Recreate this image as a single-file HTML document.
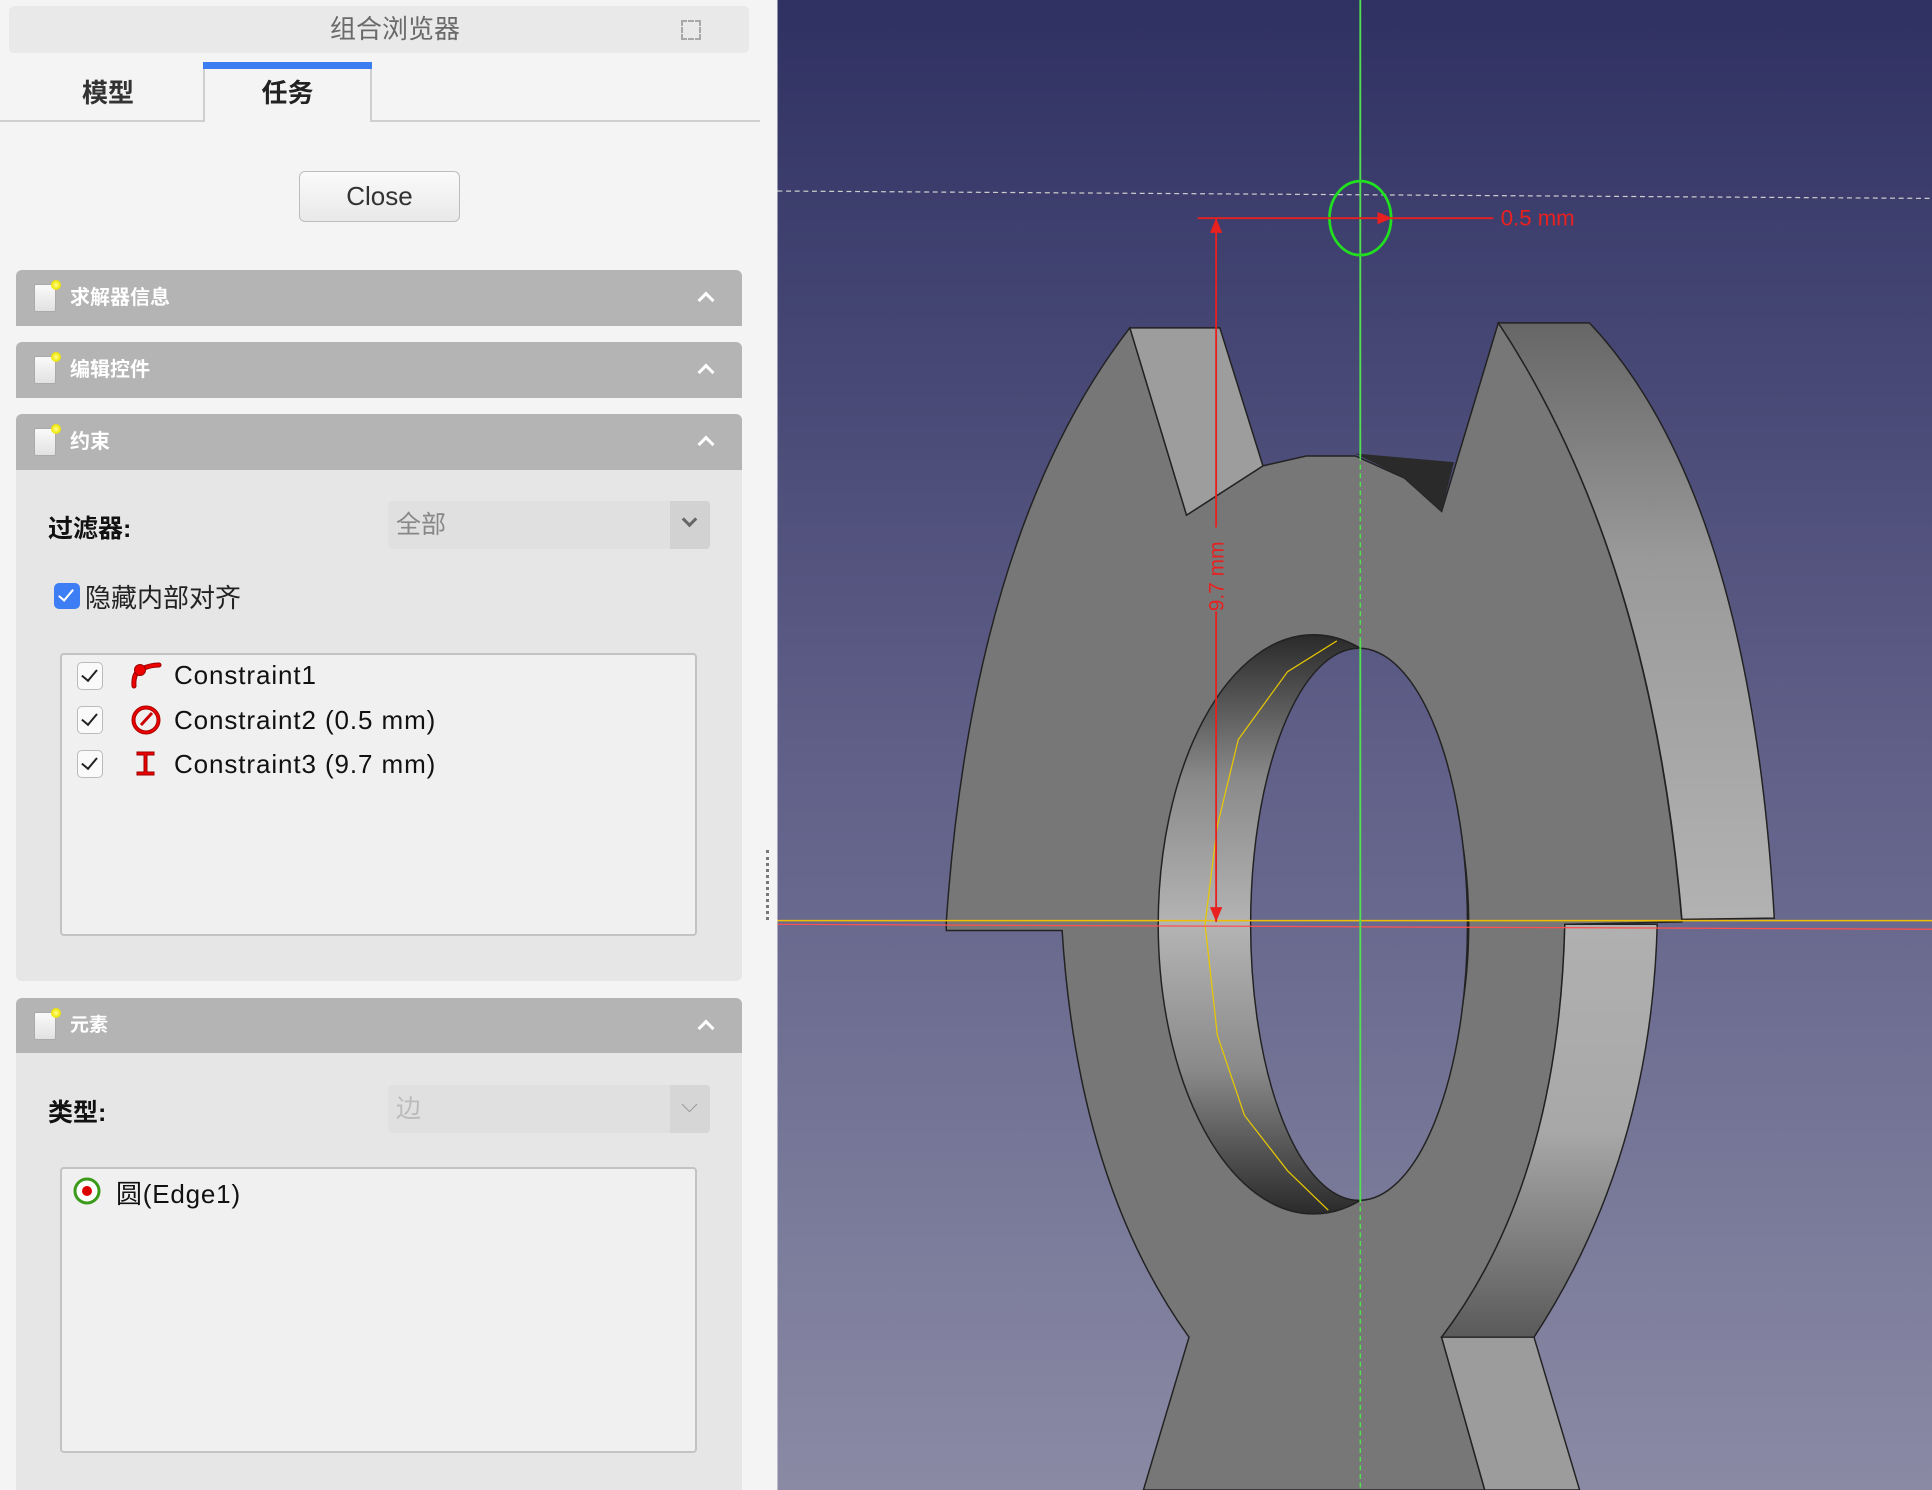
<!DOCTYPE html>
<html><head><meta charset="utf-8"><style>
*{margin:0;padding:0;box-sizing:border-box}
body{width:1932px;height:1490px;overflow:hidden;background:#f4f4f4;position:relative;font-family:"Liberation Sans","Noto Sans CJK SC",sans-serif}
.a{position:absolute}
.hdr{position:absolute;left:16px;width:726px;height:56px;background:#b4b4b4;border-radius:6px 6px 0 0;color:#fff;font-size:20px;font-weight:bold;line-height:56px}
.hdr .ic{position:absolute;left:18px;top:14px;width:22px;height:28px;background:linear-gradient(#fafafa,#e2e2e2);border:1px solid #aaa;border-radius:2px}
.hdr .ic:after{content:"";position:absolute;right:-6px;top:-5px;width:10px;height:10px;border-radius:50%;background:radial-gradient(#ffffa0,#f0e800 60%,rgba(240,232,0,0) 100%)}
.hdr .t{position:absolute;left:54px}
.hdr .ch{position:absolute;right:30px;top:24px;width:12px;height:12px;border-left:3px solid #fff;border-top:3px solid #fff;transform:rotate(45deg)}
.body{position:absolute;left:16px;width:726px;background:#e6e6e6}
.cb{position:absolute;width:26px;height:28px;background:#fafafa;border:1.5px solid #bbb;border-radius:5px}
.cb:after{content:"";position:absolute;left:7px;top:3px;width:7px;height:13px;border-right:2.5px solid #222;border-bottom:2.5px solid #222;transform:rotate(40deg)}
.row{position:absolute;left:174px;font-size:26px;color:#111;line-height:30px;letter-spacing:0.9px}
</style></head><body>
<div class="a" style="left:9px;top:6px;width:740px;height:47px;background:#e9e9e9;border-radius:5px;text-align:center;font-size:26px;color:#6a6a6a;line-height:47px;padding-left:32px">组合浏览器</div>
<div class="a" style="left:681px;top:20px;width:20px;height:20px;border:2px dashed #999;opacity:.8"></div>
<div class="a" style="left:0;top:120px;width:760px;height:2px;background:#cfcfcf"></div>
<div class="a" style="left:0;top:62px;width:216px;height:58px;text-align:center;font-size:26px;line-height:60px;color:#333;padding-top:1px;font-weight:bold">模型</div>
<div class="a" style="left:203px;top:62px;width:169px;height:60px;background:#f4f4f4;border-left:2px solid #cfcfcf;border-right:2px solid #cfcfcf;text-align:center;font-size:26px;line-height:60px;color:#222;padding-top:1px;font-weight:bold">任务</div>
<div class="a" style="left:203px;top:62px;width:169px;height:7px;background:#3c7ef2"></div>
<div class="a" style="left:299px;top:171px;width:161px;height:51px;border:1.5px solid #bdbdbd;border-radius:6px;background:linear-gradient(#fafafa,#e9e9e9);text-align:center;font-size:26px;line-height:48px;color:#333">Close</div>

<div class="hdr" style="top:270px"><div class="ic"></div><span class="t">求解器信息</span><div class="ch"></div></div>
<div class="hdr" style="top:342px"><div class="ic"></div><span class="t">编辑控件</span><div class="ch"></div></div>
<div class="hdr" style="top:414px"><div class="ic"></div><span class="t">约束</span><div class="ch"></div></div>
<div class="body" style="top:470px;height:511px;border-radius:0 0 6px 6px"></div>
<div class="a" style="left:48px;top:509px;font-size:25px;font-weight:bold;color:#111">过滤器:</div>
<div class="a" style="left:388px;top:501px;width:322px;height:48px;background:#e0e0e0;border-radius:4px;font-size:25px;color:#888;line-height:48px;padding-left:8px">全部</div>
<div class="a" style="left:670px;top:501px;width:40px;height:48px;background:#d2d2d2;border-radius:0 4px 4px 0"></div>
<div class="a" style="left:684px;top:514px;width:11px;height:11px;border-right:3px solid #666;border-bottom:3px solid #666;transform:rotate(45deg)"></div>
<div class="a" style="left:54px;top:583px;width:26px;height:26px;background:#3d7ef5;border-radius:5px"></div>
<div class="a" style="left:62px;top:586px;width:8px;height:15px;border-right:2.5px solid #fff;border-bottom:2.5px solid #fff;transform:rotate(40deg)"></div>
<div class="a" style="left:85px;top:578px;font-size:26px;color:#222">隐藏内部对齐</div>
<div class="a" style="left:60px;top:653px;width:637px;height:283px;background:#f0f0f0;border:2px solid #c3c3c3;border-radius:4px"></div>
<div class="cb" style="left:77px;top:662px"></div>
<div class="cb" style="left:77px;top:706px"></div>
<div class="cb" style="left:77px;top:750px"></div>
<svg class="a" style="left:128px;top:660px" width="36" height="120" viewBox="0 0 36 120">
<path d="M6 26 Q5 12 14 9 Q22 5 31 5" fill="none" stroke="#900" stroke-width="5" stroke-linecap="round"/>
<path d="M6 26 Q5 12 14 9 Q22 5 31 5" fill="none" stroke="#e00" stroke-width="3" stroke-linecap="round"/>
<circle cx="12" cy="10" r="5.5" fill="#e00" stroke="#900" stroke-width="1"/>
<circle cx="18" cy="60" r="12.5" fill="none" stroke="#a00" stroke-width="4"/>
<circle cx="18" cy="60" r="12.5" fill="none" stroke="#e00" stroke-width="2"/>
<path d="M13 65 L24 53" stroke="#c00" stroke-width="3"/>
<path d="M9 92h17v3h-7v17h7v3H9v-3h7V95H9z" fill="#e00" stroke="#900" stroke-width="1"/>
</svg>
<div class="row" style="top:660px">Constraint1</div>
<div class="row" style="top:705px">Constraint2 (0.5 mm)</div>
<div class="row" style="top:749px">Constraint3 (9.7 mm)</div>

<div class="hdr" style="top:998px;height:55px;line-height:55px;font-size:19px"><div class="ic"></div><span class="t">元素</span><div class="ch"></div></div>
<div class="body" style="top:1053px;height:437px"></div>
<div class="a" style="left:48px;top:1093px;font-size:25px;font-weight:bold;color:#111">类型:</div>
<div class="a" style="left:388px;top:1085px;width:322px;height:48px;background:#e0e0e0;border-radius:4px;font-size:25px;color:#bbb;line-height:48px;padding-left:8px">边</div>
<div class="a" style="left:670px;top:1085px;width:40px;height:48px;background:#d6d6d6;border-radius:0 4px 4px 0"></div>
<div class="a" style="left:684px;top:1099px;width:11px;height:11px;border-right:1.5px solid #999;border-bottom:1.5px solid #999;transform:rotate(45deg)"></div>
<div class="a" style="left:60px;top:1167px;width:637px;height:286px;background:#f0f0f0;border:2px solid #c3c3c3;border-radius:4px"></div>
<svg class="a" style="left:72px;top:1176px" width="30" height="30"><circle cx="15" cy="15" r="12" fill="#fff" stroke="#3a9a1a" stroke-width="3"/><circle cx="15" cy="15" r="5" fill="#d00"/></svg>
<div class="a" style="left:116px;top:1174px;font-size:26px;color:#111;letter-spacing:0.8px">圆(Edge1)</div>
<div class="a" style="left:766px;top:850px;width:3px;height:70px;border-left:3px dotted #777"></div>

<svg class="a" style="left:0;top:0" width="1932" height="1490" viewBox="0 0 1568 1209" preserveAspectRatio="none">
<defs>
<linearGradient id="bg" x1="0" y1="0" x2="0" y2="1209" gradientUnits="userSpaceOnUse"><stop offset="0" stop-color="#2f3162"/><stop offset="0.5" stop-color="#5f5f88"/><stop offset="1" stop-color="#8a8aa5"/></linearGradient>
<linearGradient id="ring" x1="0" y1="515" x2="0" y2="985" gradientUnits="userSpaceOnUse"><stop offset="0" stop-color="#2a2a2a"/><stop offset="0.25" stop-color="#8a8a8a"/><stop offset="0.5" stop-color="#b4b4b4"/><stop offset="0.75" stop-color="#8a8a8a"/><stop offset="1" stop-color="#2a2a2a"/></linearGradient>
<linearGradient id="rs" x1="0" y1="262" x2="0" y2="745" gradientUnits="userSpaceOnUse"><stop offset="0" stop-color="#666"/><stop offset="0.4" stop-color="#9a9a9a"/><stop offset="1" stop-color="#b2b2b2"/></linearGradient>
<linearGradient id="rl" x1="0" y1="750" x2="0" y2="1085" gradientUnits="userSpaceOnUse"><stop offset="0" stop-color="#b0b0b0"/><stop offset="0.5" stop-color="#a8a8a8"/><stop offset="1" stop-color="#5a5a5a"/></linearGradient>
</defs>
<rect x="631" y="0" width="937" height="1209" fill="url(#bg)"/>
<path d="M1216 262 L1290 262 Q1420 400 1440 745 L1365 746 Q1340 450 1216 262 Z" fill="url(#rs)" stroke="#222" stroke-width="1.2"/>
<path d="M917 266 Q790 430 768 748 L768 755 L862 755 Q875 960 965 1085 L928 1209 L1205 1209 L1170 1085 Q1265 960 1270 750 L1365 748 Q1340 450 1216 262 L1170 415 L1140 388 L1100 370 L1060 370 L1025 378 L963 418 Z" fill="#777" stroke="#222" stroke-width="1.2"/>
<path d="M1100 368 L1180 375 L1170 415 L1140 388 Z" fill="#2a2a2a"/>
<path d="M917 266 L990 266 L1025 378 L963 418 Z" fill="#9d9d9d" stroke="#222" stroke-width="1.2"/>
<path d="M1270 750 L1345 750 Q1340 940 1245 1085 L1170 1085 Q1265 960 1270 750 Z" fill="url(#rl)" stroke="#222" stroke-width="1.2"/>
<path d="M1170 1085 L1245 1085 L1282 1209 L1205 1209 Z" fill="#9c9c9c" stroke="#222" stroke-width="1.2"/>
<ellipse cx="1066" cy="750" rx="126" ry="235" fill="url(#ring)" stroke="#222" stroke-width="1.2"/>
<ellipse cx="1103" cy="750" rx="88" ry="224" fill="url(#bg)" stroke="#222" stroke-width="1.2"/>
<path d="M1085 520 L1045 545 L1005 600 L988 670 L978 750 L988 840 L1010 905 L1045 950 L1078 982" fill="none" stroke="#e8c800" stroke-width="1"/>
<line x1="631" y1="155" x2="1568" y2="161" stroke="#ccc" stroke-width="1" stroke-dasharray="4 3"/>
<line x1="631" y1="747" x2="1568" y2="747" stroke="#f0c000" stroke-width="1.2"/>
<line x1="631" y1="750" x2="1568" y2="754" stroke="#ff5050" stroke-width="1"/>
<line x1="1104" y1="0" x2="1104" y2="370" stroke="#50e050" stroke-width="1.5"/>
<line x1="1104" y1="370" x2="1104" y2="1209" stroke="#50e050" stroke-width="1.2" stroke-dasharray="4 3"/>
<line x1="1104" y1="520" x2="1104" y2="975" stroke="#50e050" stroke-width="1.5"/>
<ellipse cx="1104" cy="177" rx="25" ry="30" fill="none" stroke="#20e020" stroke-width="2.2"/>
<line x1="972" y1="177" x2="1212" y2="177" stroke="#e82020" stroke-width="1.5"/>
<path d="M1118 172 L1130 177 L1118 182 Z" fill="#e82020"/>
<text x="1218" y="183" fill="#e82020" font-size="18" font-family="Liberation Sans,sans-serif">0.5 mm</text>
<line x1="987" y1="177" x2="987" y2="748" stroke="#e82020" stroke-width="1.5"/>
<path d="M982 189 L987 177 L992 189 Z M982 736 L987 748 L992 736 Z" fill="#e82020"/>
<rect x="979" y="428" width="16" height="68" fill="#777"/>
<text x="0" y="0" fill="#e82020" font-size="17" font-family="Liberation Sans,sans-serif" transform="translate(993,496) rotate(-90)">9.7 mm</text>
</svg>
</body></html>
